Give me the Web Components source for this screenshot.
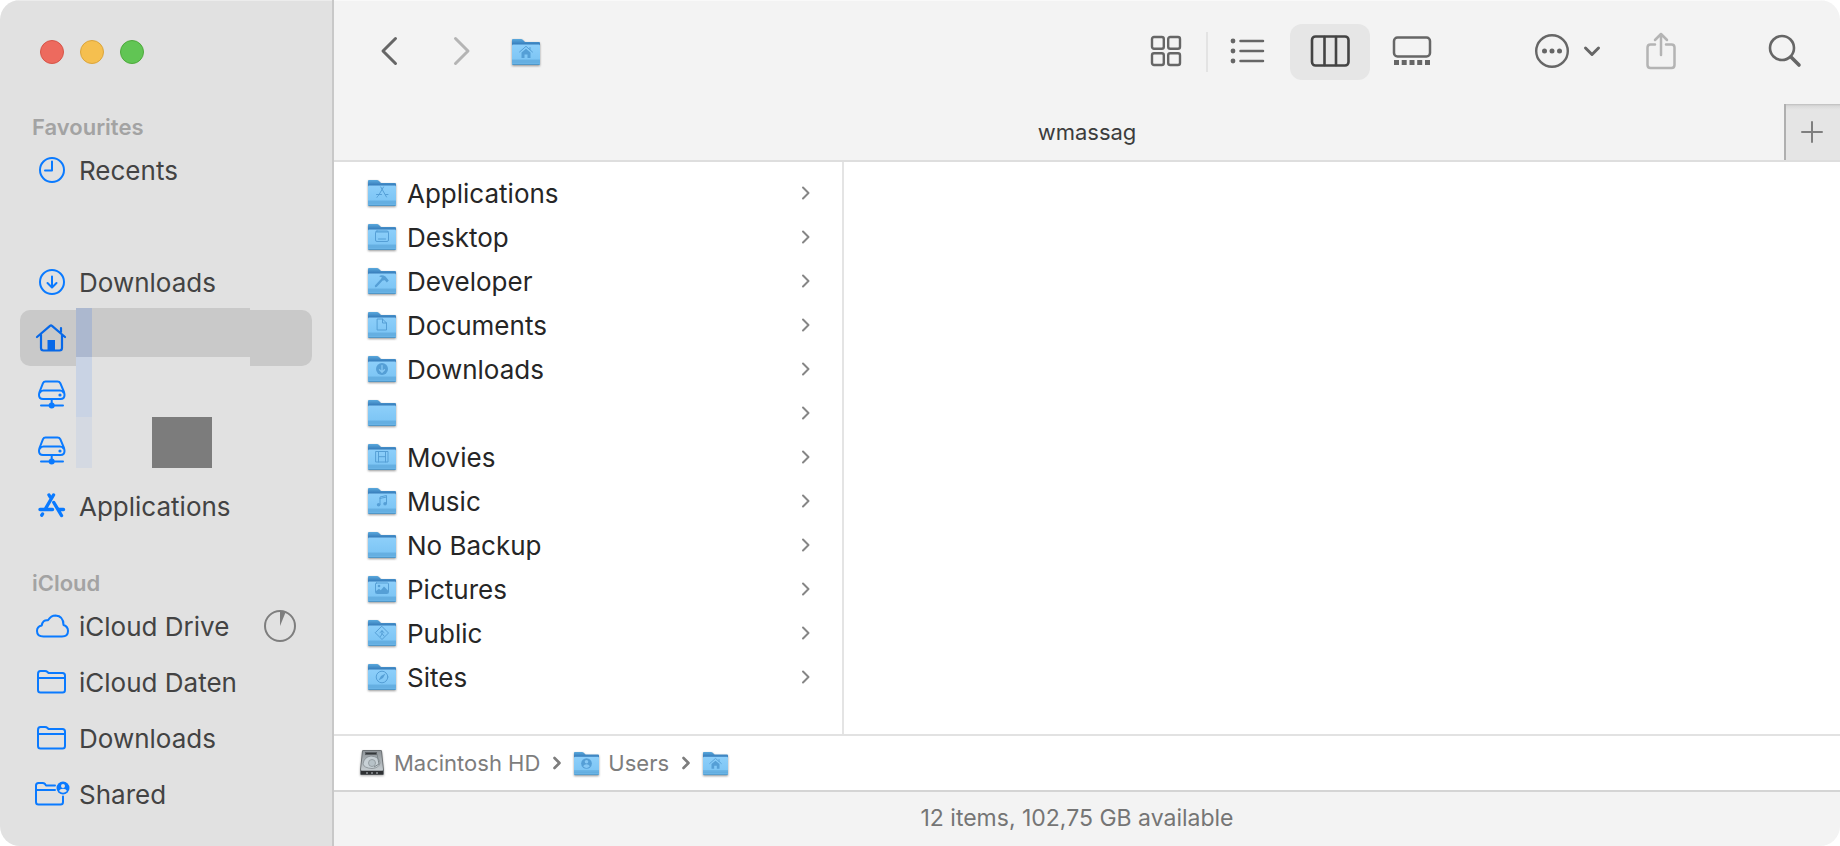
<!DOCTYPE html>
<html lang="en">
<head>
<meta charset="utf-8">
<title>Finder</title>
<style>
  html, body { margin: 0; height: 100%; background: #fff; }
  body { font-family: Inter, "Liberation Sans", sans-serif; }
</style>
</head>
<body>
<finder-window>
  <side-bar slot="sidebar">
    <side-section heading="Favourites">
      <side-item icon="clock">Recents</side-item>
      <side-item></side-item>
      <side-item icon="download">Downloads</side-item>
      <side-item icon="home" label="Home" selected masked="home"></side-item>
      <side-item icon="server" label="Server 1" masked="server"></side-item>
      <side-item icon="server" label="Server 2" masked="block"></side-item>
      <side-item icon="apps">Applications</side-item>
    </side-section>
    <side-section heading="iCloud">
      <side-item icon="cloud">iCloud Drive<ui-icon slot="status" name="progress"></ui-icon></side-item>
      <side-item icon="folder">iCloud Daten</side-item>
      <side-item icon="folder">Downloads</side-item>
      <side-item icon="shared">Shared</side-item>
    </side-section>
  </side-bar>
  <tool-bar slot="toolbar"></tool-bar>
  <tab-bar slot="tabs">wmassag</tab-bar>
  <column-view slot="content">
    <file-row glyph="apps">Applications</file-row>
    <file-row glyph="desktop">Desktop</file-row>
    <file-row glyph="hammer">Developer</file-row>
    <file-row glyph="document">Documents</file-row>
    <file-row glyph="download">Downloads</file-row>
    <file-row label="Folder"></file-row>
    <file-row glyph="movie">Movies</file-row>
    <file-row glyph="music">Music</file-row>
    <file-row>No Backup</file-row>
    <file-row glyph="picture">Pictures</file-row>
    <file-row glyph="public">Public</file-row>
    <file-row glyph="compass">Sites</file-row>
  </column-view>
  <path-bar slot="path"></path-bar>
  <status-bar slot="status">12 items, 102,75 GB available</status-bar>
</finder-window>

<script>
const define = (name, html, setup) => {
  const template = document.createElement('template');
  template.innerHTML = html;
  customElements.define(name, class extends HTMLElement {
    constructor() {
      super();
      this.attachShadow({ mode: 'open' }).append(template.content.cloneNode(true));
    }
    connectedCallback() { if (setup) setup(this, this.shadowRoot); }
  });
};

/* Line icons: [width, height, markup]; strokes use currentColor. */
const ICONS = {
  clock: [34, 34, '<circle cx="17" cy="17" r="12"/><path d="M17 8.500V17.500H10"/>'],
  download: [34, 34, '<circle cx="17" cy="17" r="12"/><path d="M17 11.500V22M12.500 18L17 22.500L21.500 18"/>'],
  home: [34, 34, '<path d="M2 16L15 4.800Q16 4 17 4.800L30 16M6 13.500V27Q6 29.500 8.500 29.500H24.500Q27 29.500 27 27V13.500M26 11V7" stroke-width="2.200"/><path d="M12.500 19H20V29.500H12.500Z" fill="currentColor" stroke="none"/>'],
  server: [34, 34, '<path d="M10.500 4.500H22.500Q24.500 4.500 25.300 6.200L29 15Q29.500 16.500 29.500 18Q29.500 22 25.500 22H8Q4 22 4 18Q4 16.500 4.500 15L8 6.200Q8.700 4.500 10.500 4.500ZM5 15.500Q6 13.500 8.500 13.500H25Q27.500 13.500 28.500 15.500M16.700 22V28.500M6 28.500H28"/><circle cx="16.700" cy="28.500" r="3" fill="currentColor" stroke="none"/><circle cx="25" cy="18" r="1.600" fill="currentColor" stroke="none"/>'],
  apps: [34, 34, '<g stroke-width="3.400"><path d="M18.500 6L10 20.500M5 20.500H17.500M14 6L15.500 8.500M18.800 13.500L26.500 26.500M6.800 26.200L7.500 25M24 20.500H28.500"/></g>'],
  cloud: [34, 34, '<path d="M8.500 27.500Q2 27.500 2 22Q2 17.500 6.800 16.500Q7.500 10.500 13 11.200Q16 6.500 20.500 6.500Q28.500 7 28.500 16Q33 17.500 33 22Q33 27.500 27 27.500Z"/>'],
  folder: [34, 34, '<path d="M3 25V9Q3 6 5.500 6H10Q11.500 6 12.500 7L13.500 8H27.500Q30 8 30 10.500V25Q30 27.500 27.500 27.500H5.500Q3 27.500 3 25ZM3.500 13H29.500"/>'],
  shared: [34, 34, '<path d="M20 8.500H11L10 7Q9 6 7.500 6H3.500Q1 6 1 8.500V25Q1 27.500 3.500 27.500H25.500Q28 27.500 28 25V19.500M1.500 13H20"/><circle cx="28" cy="11" r="6.500" fill="currentColor" stroke="none"/><g fill="#e1e1e1" stroke="none"><circle cx="28" cy="9" r="2"/><path d="M24 14Q25 11.800 28 11.800Q31 11.800 32 14Q30 15.800 28 15.800Q26 15.800 24 14Z"/></g>'],
  progress: [32, 32, '<circle cx="16" cy="16" r="15"/><path d="M16 16V1H17Q19.500 1.500 21.500 2.500Z" fill="currentColor" stroke="none"/>'],
  back: [18, 30, '<path d="M15.500 2.500L3 15L15.500 27.500" stroke-width="3"/>'],
  forward: [18, 30, '<path d="M2.500 2.500L15 15L2.500 27.500" stroke-width="3"/>'],
  grid: [30, 30, '<g stroke-width="2.400"><rect x="1" y="1" width="11.800" height="11.800" rx="2"/><rect x="17.200" y="1" width="11.800" height="11.800" rx="2"/><rect x="1" y="17.200" width="11.800" height="11.800" rx="2"/><rect x="17.200" y="17.200" width="11.800" height="11.800" rx="2"/></g>'],
  list: [36, 30, '<path d="M10.500 5H33M10.500 15H33M10.500 25H33" stroke-width="2.500"/><g fill="currentColor" stroke="none"><circle cx="3" cy="5" r="2.400"/><circle cx="3" cy="15" r="2.400"/><circle cx="3" cy="25" r="2.400"/></g>'],
  columns: [40, 32, '<g stroke-width="2.600"><rect x="2" y="1.500" width="36.500" height="29" rx="3.500"/><path d="M14.500 2V30M26 2V30"/></g>'],
  gallery: [40, 30, '<rect x="2" y="1.500" width="36" height="19" rx="3.500" stroke-width="2.500"/><path d="M2 24h5v5h-5zM9.700 24h5v5h-5zM17.500 24h5v5h-5zM25.200 24h5v5h-5zM33 24h5v5h-5z" fill="currentColor" stroke="none"/>'],
  more: [34, 34, '<circle cx="17" cy="17" r="15.800" stroke-width="2.400"/><g fill="currentColor" stroke="none"><circle cx="9.500" cy="17" r="2.500"/><circle cx="17" cy="17" r="2.500"/><circle cx="24.500" cy="17" r="2.500"/></g>'],
  down: [18, 12, '<path d="M2.500 3L9 9.500L15.500 3" stroke-width="3"/>'],
  share: [32, 38, '<path d="M10 12.500H5.500Q2.500 12.500 2.500 15.500V33Q2.500 36 5.500 36H26.500Q29.500 36 29.500 33V15.500Q29.500 12.500 26.500 12.500H21M16 23V2M10 8L16 2L22 8" stroke-width="2.500"/>'],
  search: [34, 34, '<circle cx="14" cy="14" r="12" stroke-width="2.600"/><path d="M23 23L31 31" stroke-width="3.600"/>'],
  plus: [22, 22, '<path d="M11 1V21M1 11H21"/>'],
  chevron: [10, 14, '<path d="M2 1.500L7.500 7L2 12.500"/>'],
  separator: [10, 14, '<path d="M2.500 2L7.500 7L2.500 12" stroke-width="2.600"/>'],
};

define('ui-icon', `
  <style>:host { display: block; flex: none; line-height: 0; } svg { display: block; overflow: visible; }</style>
  <svg fill="none" stroke="currentColor" stroke-width="2" stroke-linecap="round" stroke-linejoin="round" aria-hidden="true"></svg>`,
  (el, root) => {
    const [w, h, body] = ICONS[el.getAttribute('name')];
    const svg = root.querySelector('svg');
    svg.setAttribute('width', w);
    svg.setAttribute('height', h);
    svg.setAttribute('viewBox', `0 0 ${w} ${h}`);
    svg.innerHTML = body;
  });

/* Glyphs embossed on the front of a folder, centred on (14, 14). */
const GLYPHS = {
  home: '<path d="M7.500 14L14 8.300L20.500 14M18 9.500V11.500" fill="none"/><path d="M9.500 14.500L14 10.800L18.500 14.500V20H15.500V16.500H12.500V20H9.500Z" stroke="none"/>',
  apps: '<path d="M15.500 8L10.500 16.500M12.800 8L18.500 18M8.500 15.500H13.500M17.500 15.500H20M9.500 17.500L9 18.300" fill="none"/>',
  desktop: '<rect x="7.500" y="8" width="13" height="10.500" rx="1.500" fill="none"/><path d="M8 9H20M10.500 16H17.500" fill="none"/>',
  hammer: '<path d="M8 19L15 11.500" fill="none" stroke-width="2.400"/><path d="M11 9.200Q14 7 17.500 9.500L20.800 13.500L18.800 15.500L16.800 13.200L15.200 13.500L13.500 11.800L14 10.500Z" stroke="none"/>',
  document: '<path d="M9.500 8H14.500L18.500 12V19H9.500ZM14.500 8V12H18.500" fill="none"/>',
  download: '<circle cx="14" cy="14" r="6" stroke="none"/><path d="M14 10.500V17M11.500 14.700L14 17.200L16.500 14.700" stroke="#86c8f4" stroke-width="1.300" fill="none"/>',
  movie: '<path d="M8 8.500H20V19H8ZM10.500 8.500V19M17.500 8.500V19M10.500 13.700H17.500" fill="none"/>',
  music: '<path d="M12 17.500V10L18.500 8.500V16.500M12 11.500L18.500 10" fill="none"/><circle cx="10.600" cy="17.800" r="1.800" stroke="none"/><circle cx="17.100" cy="16.800" r="1.800" stroke="none"/>',
  picture: '<rect x="7.500" y="8" width="13" height="10.500" rx="1" fill="none"/><circle cx="11" cy="11" r="1.300" stroke="none"/><path d="M8 18V16L11 13.800L12.800 15.200L16 11.500L20 15.500V18Z" stroke="none"/>',
  public: '<path d="M14 7.500L20.500 14L14 20.500L7.500 14Z" fill="none"/><path d="M14 11.500V15L12.500 17.500M14 14.500L16 17M12 13.500L14 12L16 13.500" fill="none"/>',
  compass: '<circle cx="14" cy="14" r="5.800" fill="none"/><path d="M17.500 10.500L15 15L10.500 17.500L13 13Z" stroke="none"/>',
  user: '<circle cx="14" cy="14" r="6" stroke="none"/><g fill="#86c8f4" stroke="none"><circle cx="14" cy="12" r="2"/><path d="M10.200 17Q11.500 14.700 14 14.700T17.800 17Q16 19 14 19T10.200 17Z"/></g>',
};

define('folder-icon', `
  <style>
    :host { display: block; flex: none; width: 28px; height: 28px; line-height: 0; }
    :host([small]) { width: 25px; height: 25px; }
    svg { display: block; width: 100%; height: 100%; overflow: visible; filter: drop-shadow(0 1px 1px rgba(0,0,0,.4)); }
  </style>
  <svg viewBox="0 0 28 28" aria-hidden="true">
    <defs>
      <linearGradient id="b" x2="0" y2="1"><stop stop-color="#5aa9dd"/><stop offset=".25" stop-color="#3479b8"/></linearGradient>
      <linearGradient id="f" x2="0" y2="1"><stop stop-color="#8dcffa"/><stop offset="1" stop-color="#78c2f3"/></linearGradient>
    </defs>
    <path d="M0 2Q0 1 1 1H9Q10 1 11 2T13 4H27Q28 4 28 5V24H0Z" fill="url(#b)"/>
    <path d="M0 7.500Q0 6.500 1 6.500H27Q28 6.500 28 7.500V25.500Q28 27 26.500 27H1.500Q0 27 0 25.500Z" fill="url(#f)"/>
    <path d="M0 22H28V25.500Q28 27 26.500 27H1.500Q0 27 0 25.500Z" fill="#6ab4e6"/>
    <path d="M0 22H28M0 24H28" stroke="#5da6d8" stroke-width=".6"/>
    <path d="M.500 26.500H27.500" stroke="#4b8fbf" stroke-width=".8"/>
    <g class="glyph" fill="#559fd6" stroke="#559fd6" stroke-width="1" stroke-linejoin="round" stroke-linecap="round"></g>
  </svg>`,
  (el, root) => { root.querySelector('.glyph').innerHTML = GLYPHS[el.getAttribute('glyph')] || ''; });

define('disk-icon', `
  <style>:host { display: block; flex: none; width: 26px; height: 28px; } svg { display: block; filter: drop-shadow(0 1px 1px rgba(0,0,0,.3)); }</style>
  <svg width="26" height="28" viewBox="0 0 26 28" aria-hidden="true">
    <defs><linearGradient id="m" x2="0" y2="1"><stop stop-color="#8f9599"/><stop offset="1" stop-color="#c5ccd0"/></linearGradient></defs>
    <path d="M3 2Q3 1 4.500 1H21.500Q23 1 23 2L25 21V25Q25 26 23.500 26H2.500Q1 26 1 25V21Z" fill="#6d7275"/>
    <path d="M4 2H22L24 20.500Q24 21.500 23 21.500H3Q2 21.500 2 20.500Z" fill="url(#m)"/>
    <path d="M6 3H18V6H6Z" fill="#5b6064"/><path d="M7 4.500H17" stroke="#34383a"/>
    <path d="M4 15Q5 8 12 7Q21 8 21 14Q20 19 13 19.500Q5 19 4 15Z" fill="#c8d1d6" stroke="#858d92" stroke-width=".8"/>
    <circle cx="13" cy="14" r="3.500" fill="#b7c2c8" stroke="#8b9499" stroke-width=".8"/>
    <path d="M18 5L20 15L15 18" stroke="#7c8589" fill="none"/>
    <path d="M2 22H24V25.500H2Z" fill="#2e3032"/><path d="M7 24H9M12 24H14M17 24H19" stroke="#777b7e" stroke-width="2"/>
  </svg>`);

define('finder-window', `
  <style>
    :host { display: grid; grid-template-columns: 334px minmax(0, 1fr); min-height: 100vh; border-radius: 20px; overflow: hidden; background: #fff; }
    main { display: grid; grid-template-rows: 104px 58px minmax(0, 1fr) 56px 56px; min-width: 0; }
  </style>
  <slot name="sidebar"></slot>
  <main><slot name="toolbar"></slot><slot name="tabs"></slot><slot name="content"></slot><slot name="path"></slot><slot name="status"></slot></main>`);

define('side-bar', `
  <style>
    :host { display: flex; flex-direction: column; box-sizing: border-box; background: #e1e1e1; border-right: 2px solid #c8c8c8; box-shadow: inset 0 1px #ececec; }
    .lights { display: flex; gap: 16px; padding: 40px 40px 44px; }
    button { width: 24px; height: 24px; padding: 0; border-radius: 50%; border: 1px solid; }
    .close { background: #ed6a5e; border-color: #d65548; }
    .min { background: #f5bf4f; border-color: #dba53c; }
    .zoom { background: #61c554; border-color: #4eaa3c; }
    nav { display: flex; flex-direction: column; gap: 30px; }
  </style>
  <div class="lights"><button class="close" aria-label="Close"></button><button class="min" aria-label="Minimise"></button><button class="zoom" aria-label="Zoom"></button></div>
  <nav><slot></slot></nav>`);

define('side-section', `
  <style>
    :host { display: block; }
    h2 { margin: 0; padding: 4px 0 0 32px; font-size: 22px; line-height: 30px; font-weight: 600; color: #a3a3a3; }
  </style>
  <h2></h2><slot></slot>`,
  (el, root) => { root.querySelector('h2').textContent = el.getAttribute('heading'); });

define('side-item', `
  <style>
    :host { display: block; height: 56px; padding: 0 20px; font-size: 26px; }
    a { position: relative; display: flex; align-items: center; gap: 10px; height: 56px; padding: 0 16px 0 15px; border-radius: 10px; color: #434343; text-decoration: none; white-space: nowrap; }
    a > ui-icon { color: #0a7aff; }
    :host([selected]) a { background: #c9c9c9; }
    :host([selected]) a > ui-icon { color: #0768e8; }
    .label { flex: 1; }
    i { position: absolute; display: none; }
    .tint { left: 56px; width: 16px; }
    .cover { left: 72px; width: 158px; }
    :host([masked=home]) i { display: block; top: -2px; height: 49px; }
    :host([masked=home]) .tint { background: #acb8cf; box-shadow: 0 9px #c9d3e4; }
    :host([masked=home]) .cover { background: #c9c9c9; box-shadow: 0 9px #e1e1e1; }
    :host([masked=server]) .tint { display: block; top: 0; height: 51px; background: #c9d3e4; box-shadow: 0 5px #d4d9e2; }
    :host([masked=block]) .tint { display: block; top: 0; height: 46px; background: #d4d9e2; }
    :host([masked=block]) .cover { display: block; left: 132px; width: 60px; top: -5px; height: 51px; background: #7c7c7c; }
  </style>
  <a href="#"><span class="label"><slot></slot></span><slot name="status"></slot><i class="tint"></i><i class="cover"></i></a>`,
  (el, root) => {
    const a = root.querySelector('a'), name = el.getAttribute('icon');
    if (!name) { a.remove(); return; }
    const icon = document.createElement('ui-icon');
    icon.setAttribute('name', name);
    a.prepend(icon);
    if (el.hasAttribute('label')) a.setAttribute('aria-label', el.getAttribute('label'));
    const status = el.querySelector('[slot=status]');
    if (status) status.style.color = '#7e7e7e';
  });

define('tool-bar', `
  <style>
    :host { display: flex; align-items: center; box-sizing: border-box; height: 104px; padding: 0 27px; background: #f3f3f3; box-shadow: inset 0 1px #f9f9f9; color: #666; }
    button { display: flex; align-items: center; justify-content: center; box-sizing: border-box; width: 56px; height: 56px; padding: 0 0 2px; border: 0; border-radius: 12px; background: none; color: inherit; }
    .nav { display: flex; gap: 17px; padding-right: 22px; }
    .off { color: #b4b4b4; }
    .views { display: flex; align-items: center; gap: 2px; margin-left: auto; }
    .views button { width: 80px; }
    .views hr { width: 2px; height: 40px; margin: 0 -2px; border: 0; background: #e3e3e3; }
    .views .on { background: #e6e6e6; color: #444; }
    .tools { display: flex; align-items: center; margin-left: 76px; }
    .tools .more { width: 80px; gap: 14px; margin-right: 25px; }
    .tools .find { margin-left: 68px; }
  </style>
  <div class="nav"><button aria-label="Back"><ui-icon name="back"></ui-icon></button><button class="off" disabled aria-label="Forward"><ui-icon name="forward"></ui-icon></button></div>
  <folder-icon glyph="home"></folder-icon>
  <div class="views" role="group" aria-label="View">
    <button aria-label="Icons"><ui-icon name="grid"></ui-icon></button><hr>
    <button aria-label="List"><ui-icon name="list"></ui-icon></button>
    <button class="on" aria-label="Columns" aria-pressed="true"><ui-icon name="columns"></ui-icon></button>
    <button aria-label="Gallery"><ui-icon name="gallery"></ui-icon></button>
  </div>
  <div class="tools">
    <button class="more" aria-label="Actions"><ui-icon name="more"></ui-icon><ui-icon name="down"></ui-icon></button>
    <button class="off" disabled aria-label="Share"><ui-icon name="share"></ui-icon></button>
    <button class="find" aria-label="Search"><ui-icon name="search"></ui-icon></button>
  </div>`);

define('tab-bar', `
  <style>
    :host { display: flex; box-sizing: border-box; height: 58px; background: #f3f3f3; border-bottom: 2px solid #dedede; color: #3c3c3c; font-size: 22px; }
    .tab { flex: 1; padding-left: 56px; line-height: 57px; text-align: center; }
    button { display: grid; place-items: center; box-sizing: border-box; width: 56px; padding: 0 2px 0 0; border: 0; border-left: 2px solid #afafaf; background: linear-gradient(#bdbdbd 0, #d9d9d9 2px, #e5e5e5 6px); color: #7f7f7f; }
  </style>
  <div class="tab"><slot></slot></div>
  <button aria-label="New tab"><ui-icon name="plus"></ui-icon></button>`);

define('column-view', `
  <style>
    :host { display: grid; grid-template-columns: 510px minmax(0, 1fr); background: #fff; }
    .column { box-sizing: border-box; padding: 9px 31px 0 34px; border-right: 2px solid #e4e4e4; }
  </style>
  <nav class="column" aria-label="Home folder"><slot></slot></nav><div></div>`);

define('file-row', `
  <style>
    :host { display: block; font-size: 26px; }
    a { display: flex; align-items: center; height: 44px; gap: 11px; color: #262626; text-decoration: none; }
    span { flex: 1; }
    ui-icon { color: #868686; }
  </style>
  <a href="#"><folder-icon></folder-icon><span><slot></slot></span><ui-icon name="chevron"></ui-icon></a>`,
  (el, root) => {
    const glyph = el.getAttribute('glyph');
    if (glyph) {
      const icon = document.createElement('folder-icon');
      icon.setAttribute('glyph', glyph);
      root.querySelector('folder-icon').replaceWith(icon);
    }
    if (el.hasAttribute('label')) root.querySelector('a').setAttribute('aria-label', el.getAttribute('label'));
  });

define('path-bar', `
  <style>
    :host { display: flex; align-items: center; box-sizing: border-box; height: 56px; padding-left: 25px; gap: 12px; background: #fff; border-top: 2px solid #e2e2e2; color: #7d7d7d; font-size: 22px; }
    a { display: flex; align-items: center; gap: 9px; color: inherit; text-decoration: none; }
  </style>
  <a href="#"><disk-icon></disk-icon>Macintosh HD</a><ui-icon name="separator"></ui-icon>
  <a href="#"><folder-icon small glyph="user"></folder-icon>Users</a><ui-icon name="separator"></ui-icon>
  <a href="#" aria-label="Home"><folder-icon small glyph="home"></folder-icon></a>`);

define('status-bar', `
  <style>
    :host { display: block; box-sizing: border-box; height: 56px; padding-right: 20px; background: #f3f3f3; border-top: 2px solid #d4d4d4; color: #757575; font-size: 23px; line-height: 53px; text-align: center; }
  </style>
  <slot></slot>`);
</script>
</body>
</html>
